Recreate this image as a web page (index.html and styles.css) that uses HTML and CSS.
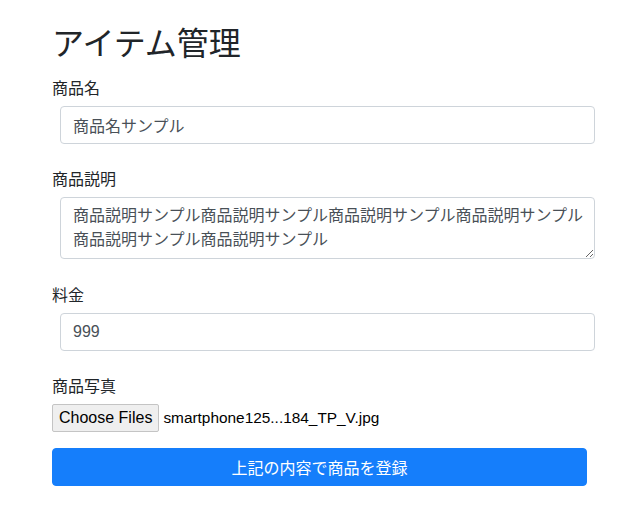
FILE: index.html
```html
<!DOCTYPE html>
<html lang="ja">
<head>
<meta charset="utf-8">
<title>アイテム管理</title>
<link rel="stylesheet" href="styles.css">
</head>
<body>
<div class="container">
  <h2 class="title">アイテム管理</h2>
  <form class="form">
    <div class="group">
      <label class="label">商品名</label>
      <input class="control" type="text" value="商品名サンプル">
    </div>
    <div class="group group-area">
      <label class="label">商品説明</label>
      <textarea class="control area" rows="2">商品説明サンプル商品説明サンプル商品説明サンプル商品説明サンプル
商品説明サンプル商品説明サンプル</textarea>
    </div>
    <div class="group">
      <label class="label">料金</label>
      <input class="control" type="text" value="999">
    </div>
    <div class="group file-group">
      <label class="label">商品写真</label>
      <div class="file">
        <span class="file-btn">Choose Files</span>
        <span class="file-name">smartphone125...184_TP_V.jpg</span>
      </div>
    </div>
    <button type="button" class="submit">上記の内容で商品を登録</button>
  </form>
</div>
</body>
</html>
```
FILE: styles.css
```css
* { box-sizing: border-box; }
html, body { margin: 0; padding: 0; background: #fff; }
body {
  font-family: "Liberation Sans", "Noto Sans CJK JP", sans-serif;
  font-size: 16px;
  line-height: 1.5;
  color: #212529;
}
.container {
  width: 587px;
  padding: 22px 0 0 52px;
}
.title {
  margin: 0 0 15px;
  font-family: "Noto Sans CJK JP", sans-serif;
  font-size: 32px;
  font-weight: 400;
  line-height: 1.2;
  color: #212529;
}
.form { display: flex; flex-direction: column; }
.group { display: flex; flex-direction: column; margin-bottom: 22px; }
.group-area { margin-bottom: 23px; }
.file-group { margin-bottom: 16px; }
.label {
  display: block;
  font-family: "Noto Sans CJK JP", sans-serif;
  font-size: 16px;
  line-height: 24px;
  margin-bottom: 7px;
  color: #212529;
}
.control {
  display: block;
  width: 535px;
  height: 38px;
  margin-left: 8px;
  padding: 6px 12px;
  font-family: "Liberation Sans", "Noto Sans CJK JP", sans-serif;
  font-size: 16px;
  line-height: 24px;
  color: #495057;
  background: #fff;
  border: 1px solid #ced4da;
  border-radius: 4px;
  outline: none;
}
.area {
  height: 62px;
  padding-right: 4px;
  resize: vertical;
  overflow: hidden;
}
.file { display: flex; align-items: center; gap: 4px; height: 28px; }
.file-btn {
  display: inline-block;
  height: 28px;
  padding: 4px 6px;
  font-size: 16px;
  line-height: 18px;
  color: #000;
  background: #efefef;
  border: 1px solid #c4c4c4;
  border-radius: 2px;
}
.file-name { font-size: 15.4px; line-height: 18px; color: #000; }
.submit {
  width: 535px;
  height: 38px;
  padding: 6px 12px;
  font-family: "Noto Sans CJK JP", sans-serif;
  font-size: 16px;
  line-height: 24px;
  color: #fff;
  background: #157efb;
  border: 1px solid #157efb;
  border-radius: 4px;
  text-align: center;
}
```
